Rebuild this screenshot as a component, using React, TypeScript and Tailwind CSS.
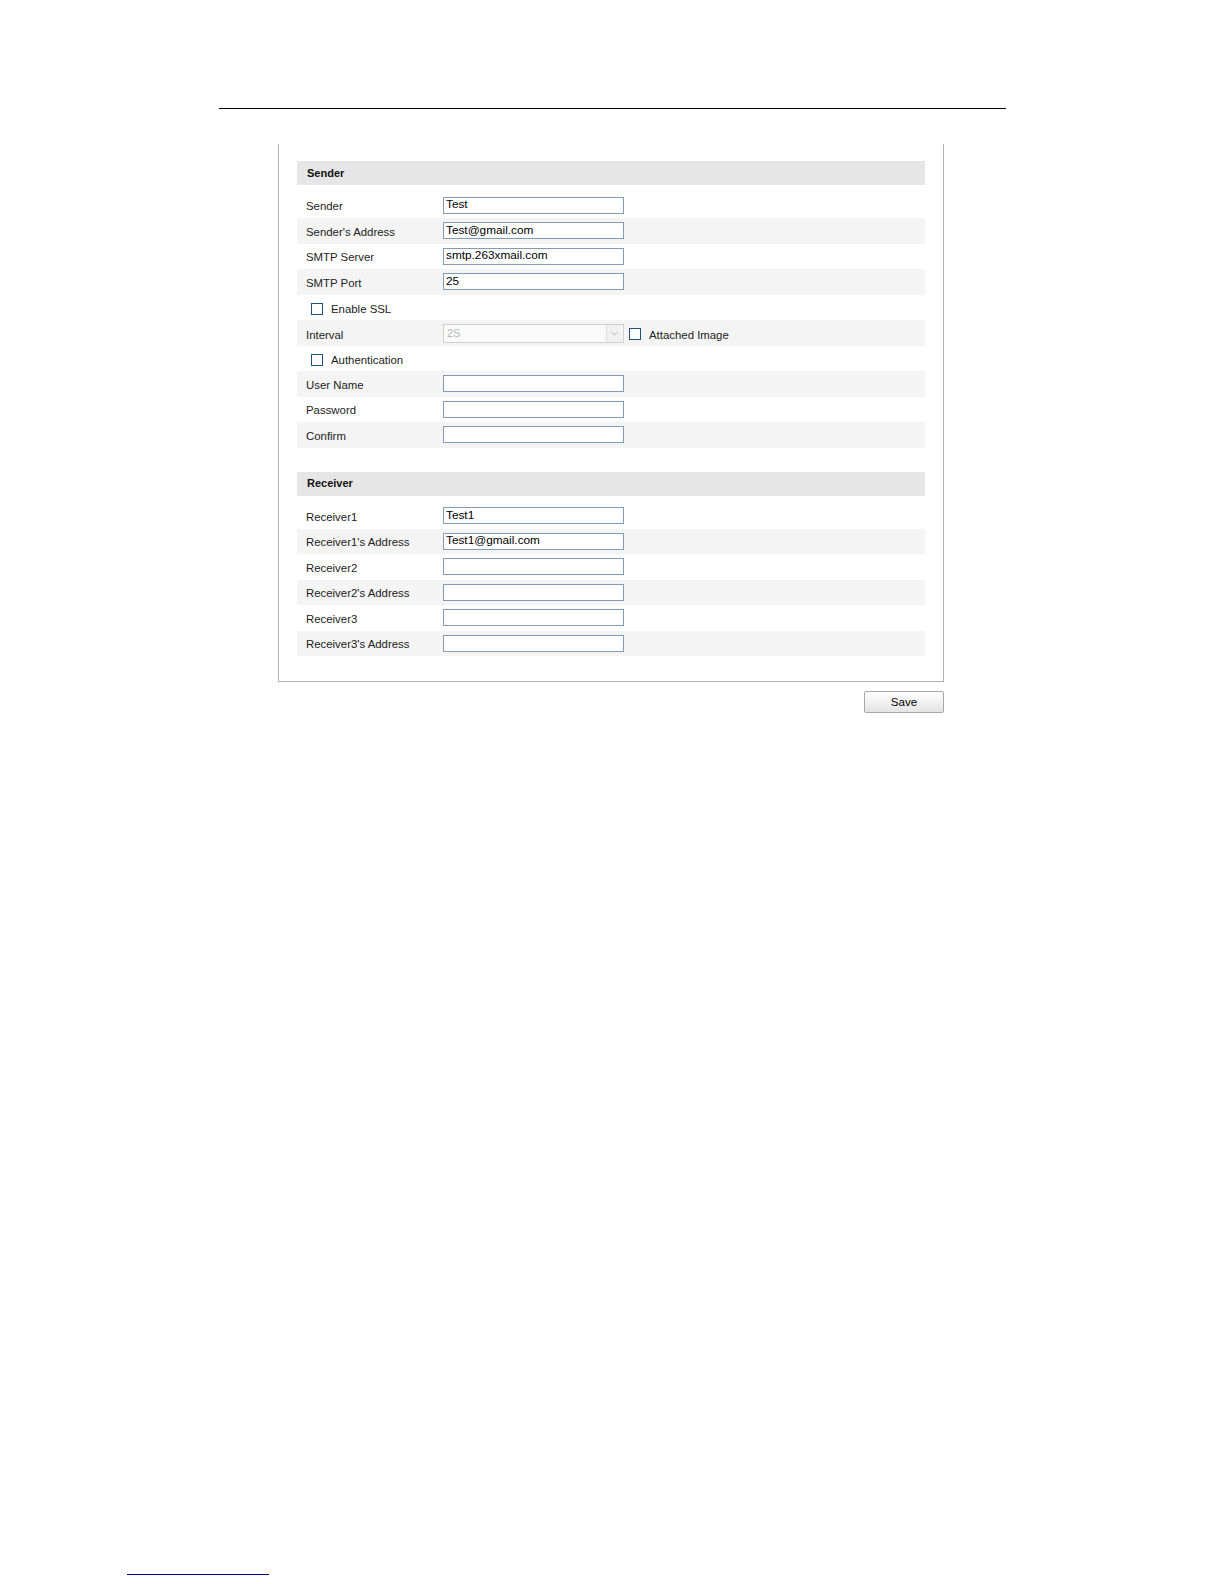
import { ChevronDown } from 'lucide-react'

type Field = {
  label: string
  value?: string
  kind?: 'input' | 'check' | 'interval'
}

const senderFields: Field[] = [
  { label: 'Sender', value: 'Test' },
  { label: "Sender's Address", value: 'Test@gmail.com' },
  { label: 'SMTP Server', value: 'smtp.263xmail.com' },
  { label: 'SMTP Port', value: '25' },
  { label: 'Enable SSL', kind: 'check' },
  { label: 'Interval', kind: 'interval' },
  { label: 'Authentication', kind: 'check' },
  { label: 'User Name', value: '' },
  { label: 'Password', value: '' },
  { label: 'Confirm', value: '' },
]

const receiverFields: Field[] = [
  { label: 'Receiver1', value: 'Test1' },
  { label: "Receiver1's Address", value: 'Test1@gmail.com' },
  { label: 'Receiver2', value: '' },
  { label: "Receiver2's Address", value: '' },
  { label: 'Receiver3', value: '' },
  { label: "Receiver3's Address", value: '' },
]

function Checkbox() {
  return <span className="block w-[12px] h-[12px] border border-[#1c5180] bg-white shrink-0" />
}

function TextBox({ value }: { value: string }) {
  return (
    <div className="w-[181px] h-[17px] border border-[#7f9db9] bg-white px-[2px] flex items-center text-[11.8px] text-black leading-none">
      {value}
    </div>
  )
}

function Row({ field, striped }: { field: Field; striped: boolean }) {
  const bg = striped ? 'bg-[#f4f4f4]' : 'bg-white'

  if (field.kind === 'check') {
    return (
      <div className={`h-[25.5px] flex items-center pl-[14px] pt-[4px] gap-[8px] ${bg}`}>
        <Checkbox />
        <span className="pt-[1px]">{field.label}</span>
      </div>
    )
  }

  return (
    <div className={`h-[25.5px] flex items-center ${bg}`}>
      <span className={`w-[146px] pl-[9px] shrink-0 ${field.kind === 'interval' ? 'pt-[6px]' : 'pt-[3px]'}`}>
        {field.label}
      </span>
      {field.kind === 'interval' ? (
        <div className="flex items-center pt-[2px]">
          <div className="w-[181px] h-[19px] border border-[#cfcfcf] bg-[#fafafa] flex items-center">
            <span className="flex-1 pl-[3px] text-[11px] text-[#b5b5b5]">2S</span>
            <span className="w-[16px] h-[17px] mr-[1px] border-l border-[#e2e2e2] bg-[#f0f0f0] flex items-center justify-center">
              <ChevronDown size={11} strokeWidth={2.5} className="text-[#c8c8c8]" />
            </span>
          </div>
          <span className="ml-[5px] mr-[8px]">
            <Checkbox />
          </span>
          <span className="pt-[3px]">Attached Image</span>
        </div>
      ) : (
        <TextBox value={field.value ?? ''} />
      )}
    </div>
  )
}

function Section({ title, fields }: { title: string; fields: Field[] }) {
  return (
    <div>
      <div className="h-[24px] bg-[#e6e6e6] flex items-center pl-[10px] font-bold text-[11px] text-[#111]">{title}</div>
      <div className="mt-[7.5px]">
        {fields.map((f, i) => (
          <Row key={f.label} field={f} striped={i % 2 === 1} />
        ))}
      </div>
    </div>
  )
}

export default function App() {
  return (
    <div
      className="w-[1224px] h-[1584px] bg-white text-[11.4px] text-[#222] pt-[108px]"
      style={{ fontFamily: '"Liberation Sans", Arial, sans-serif' }}
    >
      <div className="ml-[219px] w-[787px] h-[1px] bg-black" />

      <div className="ml-[278px] w-[666px] mt-[35px]">
        <div className="border-x border-b border-[#b3b3b3] px-[18px] pt-[17px] pb-[25px]">
          <Section title="Sender" fields={senderFields} />
          <div className="mt-[24px]">
            <Section title="Receiver" fields={receiverFields} />
          </div>
        </div>

        <div className="flex justify-end mt-[9px]">
          <button className="w-[80px] h-[22px] border border-[#a7a7a7] rounded-[2px] bg-gradient-to-b from-white to-[#e4e4e4] text-[11.6px] text-black">
            Save
          </button>
        </div>
      </div>

      <div className="ml-[127px] mt-[861px] w-[142px] h-[1px] bg-[#000080]" />
    </div>
  )
}
